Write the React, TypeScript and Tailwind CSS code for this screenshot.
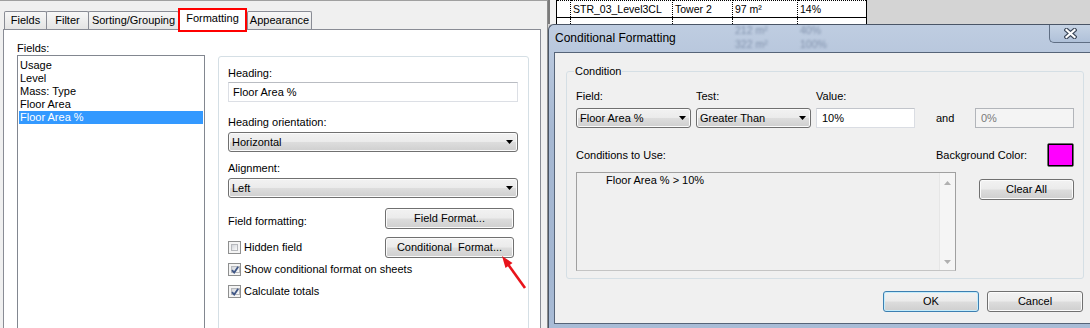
const btn =
  'flex items-center justify-center rounded-[3px] border border-[#707070] bg-[linear-gradient(#f2f2f2,#ebebeb_49%,#dddddd_51%,#cfcfcf)] shadow-[inset_0_0_0_1px_#fbfbfb]'

function DownArrow({ color = '#000' }: { color?: string }) {
  return (
    <svg width="7" height="4" viewBox="0 0 7 4">
      <path d="M0 0h7L3.5 4z" fill={color} />
    </svg>
  )
}

function Combo({ text, className }: { text: string; className: string }) {
  return (
    <div className={`${btn} ${className} h-[20px] !justify-between pl-[3px] pr-[4px]`}>
      <span>{text}</span>
      <DownArrow />
    </div>
  )
}

function Button({ text, className }: { text: string; className: string }) {
  return <div className={`${btn} ${className}`}>{text}</div>
}

function Check({ on, label }: { on: boolean; label: string }) {
  return (
    <div className="flex items-center gap-[3px] leading-[13px]">
      <span className="w-[13px] h-[13px] border border-[#8e8f8f] bg-[#f4f4f4] p-[2px] flex">
        <span className="flex-1 border border-[#b7b9bd] bg-[linear-gradient(135deg,#d2d5da,#fbfbfb)] flex items-center justify-center">
          {on && (
            <svg width="8" height="8" viewBox="0 0 8 8" className="-ml-px">
              <path d="M1 4.2 3.2 6.6 7.2 0.8" fill="none" stroke="#3f5686" strokeWidth="1.8" />
            </svg>
          )}
        </span>
      </span>
      <span>{label}</span>
    </div>
  )
}

function FieldsTab() {
  const fields = ['Usage', 'Level', 'Mass: Type', 'Floor Area', 'Floor Area %']
  return (
    <div className="w-[548px] h-full shrink-0 relative overflow-hidden bg-[#f0f0f0] border-t border-t-[#a0a0a0] border-r border-r-[#8d8d8d] pl-[3px] pr-[6px] pt-[7px] flex flex-col">
      {/* tab strip */}
      <div className="flex items-end h-[21px] pl-[1px] shrink-0">
        <div className="w-[43px] h-[18px] border border-b-0 border-[#898c95] rounded-t-[2px] bg-[linear-gradient(#f7f7f7,#e4e4e4)] flex items-center justify-center">
          Fields
        </div>
        <div className="-ml-px w-[43px] h-[18px] border border-b-0 border-[#898c95] rounded-t-[2px] bg-[linear-gradient(#f7f7f7,#e4e4e4)] flex items-center justify-center">
          Filter
        </div>
        <div className="-ml-px w-[91px] h-[18px] border border-b-0 border-[#898c95] rounded-t-[2px] bg-[linear-gradient(#f7f7f7,#e4e4e4)] flex items-center justify-center">
          Sorting/Grouping
        </div>
        <div className="-ml-px self-start relative z-10 w-[69px] h-[24px] border-2 border-[#ff0000] bg-white flex items-center justify-center pb-[3px]">
          Formatting
        </div>
        <div className="w-[65px] h-[18px] border border-b-0 border-[#898c95] rounded-t-[2px] bg-[linear-gradient(#f7f7f7,#e4e4e4)] flex items-center justify-center">
          Appearance
        </div>
      </div>

      <div className="h-[310px] shrink-0 border border-[#898c95] bg-white pl-[13px] pt-[12px] flex">
        <div className="w-[188px] flex flex-col">
          <span className="leading-[13px]">Fields:</span>
          <div className="h-[290px] border border-[#828790] bg-white px-px pt-[3px]">
            {fields.map((f, i) => (
              <div
                key={f}
                className={
                  i === fields.length - 1
                    ? 'h-[13px] leading-[13px] pl-[1px] bg-[#3399ff] text-white'
                    : 'h-[13px] leading-[13px] pl-[1px]'
                }
              >
                {f}
              </div>
            ))}
          </div>
        </div>

        <div className="ml-[13px] mt-[14px] w-[311px] h-[290px] border border-[#d5dfe5] rounded-[3px] pl-[9px] pt-[10px] flex flex-col">
          <span className="leading-[13px]">Heading:</span>
          <div className="mt-[2px] w-[290px] h-[20px] border border-[#dcdfe5] border-t-[#b9bcc2] bg-white pl-[4px] flex items-center">
            Floor Area %
          </div>
          <span className="mt-[14px] leading-[13px]">Heading orientation:</span>
          <Combo text="Horizontal" className="mt-[3px] w-[290px]" />
          <span className="mt-[10px] leading-[13px]">Alignment:</span>
          <Combo text="Left" className="mt-[3px] w-[290px]" />

          <div className="mt-[10px] flex">
            <span className="w-[157px] pt-[7px] leading-[13px]">Field formatting:</span>
            <Button text="Field Format..." className="w-[129px] h-[21px]" />
          </div>
          <div className="mt-[8px] flex items-center">
            <div className="w-[157px]">
              <Check on={false} label="Hidden field" />
            </div>
            <Button text={'Conditional\u00a0 Format...'} className="w-[129px] h-[21px]" />
          </div>
          <div className="mt-[5px]">
            <Check on label="Show conditional format on sheets" />
          </div>
          <div className="mt-[9px]">
            <Check on label="Calculate totals" />
          </div>
        </div>
      </div>

      {/* red callout arrow */}
      <svg className="absolute left-[495px] top-[250px] z-20" width="40" height="45" viewBox="0 0 40 45">
        <path d="M30 37 13.5 14" stroke="#e8141b" strokeWidth="2.6" fill="none" />
        <path d="M7 5 17.5 12 10.5 17z" fill="#e8141b" />
      </svg>
    </div>
  )
}

function SheetStrip() {
  return (
    <div className="h-[24px] flex shrink-0 overflow-hidden">
      <div className="w-[8px] border-l-2 border-[#7b7b7b] bg-[#f3f3f3]" />
      <div className="w-[311px] flex flex-col">
        <div className="h-[18px] shrink-0 flex bg-white border border-t-0 border-black leading-[17px] text-[10.5px]">
          <div className="w-[14px] border-t border-r border-dotted border-black" />
          <div className="w-[102px] pl-[2px] border-t border-r border-dotted border-black">STR_03_Level3CL</div>
          <div className="w-[60px] pl-[2px] border-t border-r border-dotted border-black">Tower 2</div>
          <div className="w-[65px] pl-[2px] border-t border-r border-dotted border-black">97 m²</div>
          <div className="flex-1 pl-[2px] border-t border-dotted border-black">14%</div>
        </div>
        <div className="h-[18px] shrink-0 flex bg-white border-x border-black">
          <div className="w-[14px] border-r border-dotted border-black" />
          <div className="w-[102px] border-r border-dotted border-black" />
          <div className="w-[60px] border-r border-dotted border-black" />
          <div className="w-[65px] border-r border-dotted border-black" />
          <div className="flex-1" />
        </div>
      </div>
    </div>
  )
}

function ConditionalFormatting() {
  return (
    <div className="flex-1 flex flex-col border-l border-t border-[#4a5566] rounded-tl-[6px] pl-[5px] overflow-hidden bg-[linear-gradient(to_bottom,#bfcde1,#a6b8d2_35%,#a3b6d1_80%,#a9bcd6)]">
      <div className="h-[27px] shrink-0 flex items-start relative">
        <span className="pl-[1px] leading-[27px] text-[12px] text-black relative z-10">Conditional Formatting</span>
        {/* sheet rows showing through the glass */}
        <div className="absolute left-[181px] top-[-2px] flex flex-col text-[10.5px] leading-[14px] text-[#8293ad] blur-[1.3px]">
          <div className="flex">
            <span className="w-[65px]">212 m²</span>
            <span>40%</span>
          </div>
          <div className="flex">
            <span className="w-[65px]">322 m²</span>
            <span>100%</span>
          </div>
        </div>
        <div className="ml-auto w-[41px] h-[18px] border-l border-b border-[#5f6e84] rounded-bl-[5px] bg-[linear-gradient(#c6d3e4,#b0c1d9)] flex items-center justify-center">
          <svg width="13" height="11" viewBox="0 0 13 11">
            <path d="M2.5 2 10.5 9M10.5 2 2.5 9" stroke="#3e4a5c" strokeWidth="4.4" strokeLinecap="square" />
            <path d="M2.5 2 10.5 9M10.5 2 2.5 9" stroke="#ffffff" strokeWidth="2.2" strokeLinecap="square" />
          </svg>
        </div>
      </div>

      <div className="h-[272px] shrink-0 border border-r-0 border-[#566478] bg-[#f0f0f0] flex flex-col">
        <div className="ml-[11px] mt-[18px] w-[518px] h-[208px] border border-[#d5dfe5] rounded-[3px] pl-[9px] flex flex-col">
          <span className="self-start -mt-[7px] -ml-[2px] px-[1px] bg-[#f0f0f0] leading-[13px]">Condition</span>

          <div className="mt-[12px] flex leading-[13px]">
            <span className="w-[120px]">Field:</span>
            <span className="w-[120px]">Test:</span>
            <span>Value:</span>
          </div>

          <div className="mt-[5px] h-[20px] flex items-center">
            <Combo text="Floor Area %" className="w-[115px]" />
            <Combo text="Greater Than" className="ml-[5px] w-[115px]" />
            <div className="ml-[5px] w-[99px] h-[20px] border border-[#dadde3] border-t-[#c2c5cb] bg-white pl-[5px] flex items-center">
              10%
            </div>
            <span className="ml-[21px] w-[39px]">and</span>
            <div className="w-[99px] h-[20px] border border-[#b2b5ba] bg-[#f4f4f4] pl-[5px] flex items-center text-[#7a7a7a]">
              0%
            </div>
          </div>

          <div className="mt-[15px] flex items-center">
            <span className="w-[360px]">Conditions to Use:</span>
            <span className="w-[111px]">Background Color:</span>
            <div className="w-[27px] h-[24px] border border-[#6a6a6a] rounded-[2px] flex">
              <div className="flex-1 border border-black bg-[#ff00ff]" />
            </div>
          </div>

          <div className="mt-[5px] flex items-start">
            <div className="w-[380px] h-[99px] border border-[#a0a0a0] border-b-[#c4c4c4] flex">
              <div className="flex-1 pl-[29px] pt-[1px] leading-[13px]">Floor Area % &gt; 10%</div>
              <div className="w-[16px] bg-[#f5f5f5] border-l border-[#e6e6e6] flex flex-col items-center justify-between pt-[8px] pb-[6px]">
                <svg width="7" height="4" viewBox="0 0 7 4">
                  <path d="M0 4h7L3.5 0z" fill="#b0b0b0" />
                </svg>
                <DownArrow color="#b0b0b0" />
              </div>
            </div>
            <Button text="Clear All" className="ml-[23px] mt-[7px] w-[95px] h-[21px]" />
          </div>
        </div>

        <div className="mt-[12px] ml-[328px] flex">
          <div className="w-[96px] h-[21px] rounded-[3px] border border-[#3c7fb1] bg-[linear-gradient(#f2f2f2,#ebebeb_49%,#dddddd_51%,#cfcfcf)] shadow-[inset_0_0_0_1px_#c4ecfb] flex items-center justify-center">
            OK
          </div>
          <Button text="Cancel" className="ml-[8px] w-[96px] h-[21px]" />
        </div>
      </div>
    </div>
  )
}

export default function App() {
  return (
    <div className="w-[1090px] h-[328px] flex overflow-hidden bg-[#f0f0f0] text-[11px] text-black font-['Liberation_Sans',Arial,sans-serif]">
      <FieldsTab />
      <div className="w-[542px] h-full shrink-0 flex flex-col bg-[#d4d4d4]">
        <SheetStrip />
        <ConditionalFormatting />
      </div>
    </div>
  )
}
